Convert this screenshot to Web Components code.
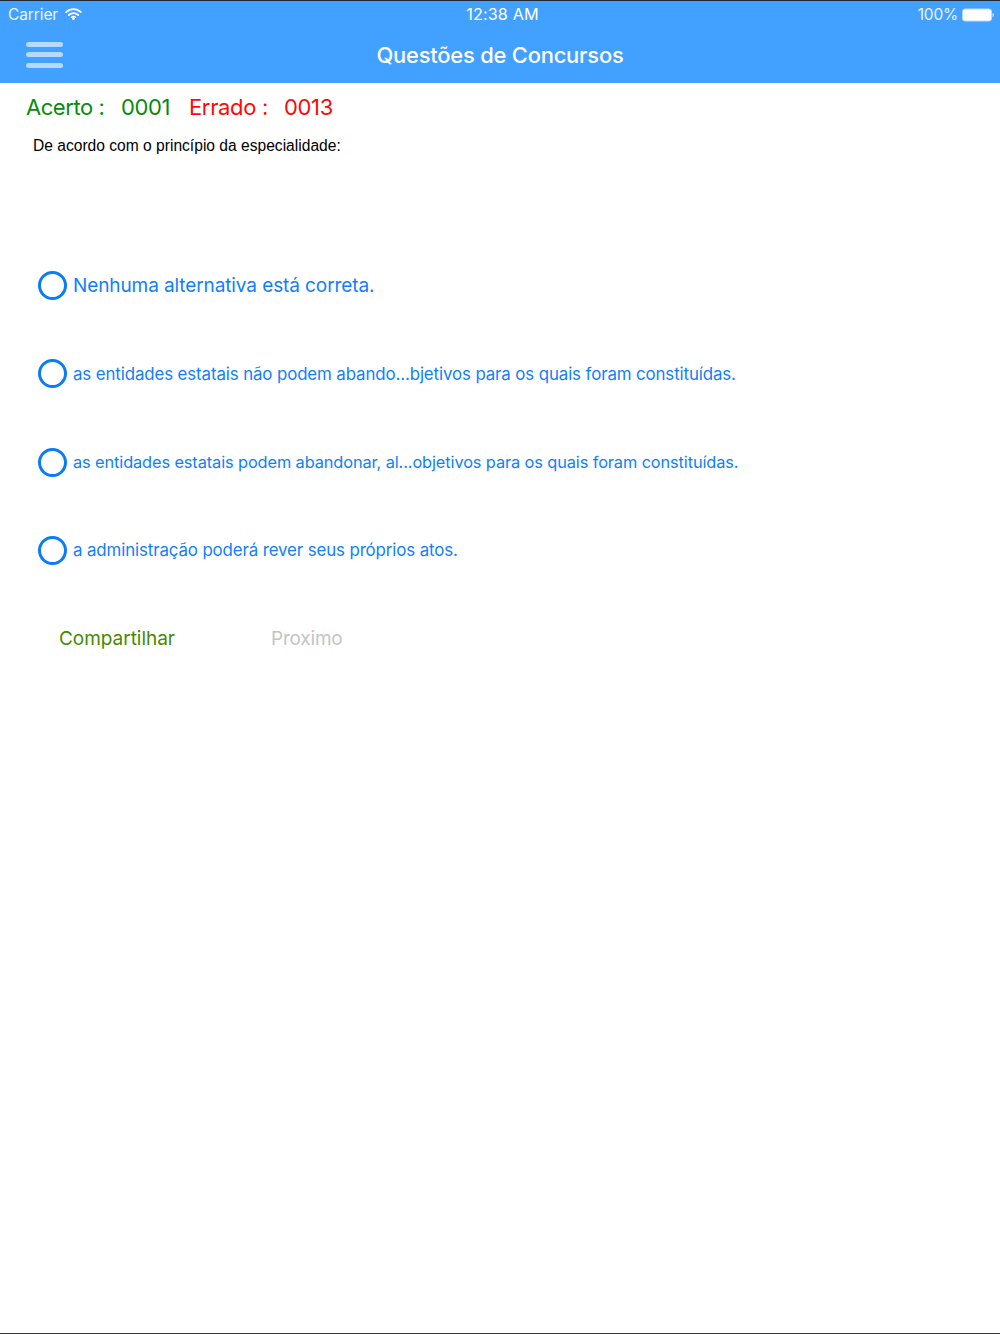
<!DOCTYPE html>
<html lang="pt"><head><meta charset="utf-8"><title>Questões de Concursos</title>
<style>html,body{margin:0;padding:0;background:#fff}</style></head><body>
<quiz-app>
<app-header title="Questões de Concursos"></app-header>
<score-bar acerto="0001" errado="0013"></score-bar>
<question-text>De acordo com o princípio da especialidade:</question-text>
<option-list>
<radio-option size="19">Nenhuma alternativa está correta.</radio-option>
<radio-option size="16.83">as entidades estatais não podem abando...bjetivos para os quais foram constituídas.</radio-option>
<radio-option size="16.34">as entidades estatais podem abandonar, al...objetivos para os quais foram constituídas.</radio-option>
<radio-option size="16.83">a administração poderá rever seus próprios atos.</radio-option>
</option-list>
<action-bar></action-bar>
</quiz-app>
<script>
const def=(n,html)=>customElements.define(n,class extends HTMLElement{connectedCallback(){if(this.shadowRoot)return;const s=this.attachShadow({mode:'open'});s.innerHTML=typeof html==='function'?html(this):html;}});
const SF='Inter,"Liberation Sans",sans-serif';
def('quiz-app',`<style>:host{display:flex;flex-direction:column;box-sizing:border-box;width:1000px;height:1334px;border-top:1px solid #1f2a36;border-bottom:1px solid #3c3c3c;background:#fff;overflow:hidden}</style><slot></slot>`);
def('app-header',h=>`<style>:host{display:block;background:#42a1ff;height:82px;color:#fff;font-family:${SF}}
.st{height:27px;display:grid;grid-template-columns:1fr auto 1fr;align-items:center;padding:0 6px 0 8px;font-size:15.5px;color:#eaf4ff}
.l{display:flex;align-items:center;gap:7px;letter-spacing:-.1px}.r{display:flex;justify-content:flex-end;align-items:center;gap:4px;letter-spacing:-.2px}
.c{font-weight:400;font-size:16.2px;letter-spacing:.15px;color:#fff;margin:0 0 2px 3px}
.nav{height:55px;display:grid;grid-template-columns:1fr auto 1fr;align-items:center;padding:0 26px 0}
.t{font-size:21.9px;font-weight:500;letter-spacing:-.2px;margin-top:-2px;white-space:nowrap}
.m{display:flex;flex-direction:column;gap:5.5px;width:37px;margin-top:-2px}.m i{display:block;height:5px;border-radius:2.5px;background:#b5d9ff}
svg{display:block}</style>
<div class="st"><div class="l">Carrier<svg width="17" height="13" viewBox="0 0 17 13" fill="none" stroke="#fff" stroke-width="1.8" stroke-linecap="round"><path d="M1.2 4.2a10.4 10.4 0 0 1 14.6 0"/><path d="M3.8 7a6.7 6.7 0 0 1 9.4 0"/><circle cx="8.5" cy="10.5" r="1.5" fill="#fff" stroke="none"/><path d="M6.300 9.400a3 3 0 0 1 4.400 0" stroke-width="1.2"/></svg></div><div class="c">12:38 AM</div><div class="r">100%<svg width="32" height="14" viewBox="0 0 32 14"><rect x=".5" y="1" width="29" height="12" rx="2.5" fill="#fff" stroke="#b9dcff"/><path d="M30.5 5v4c.9-.3 1.300-1 1.300-2s-.4-1.700-1.300-2z" fill="#dcecff"/></svg></div></div>
<div class="nav"><div class="m"><i></i><i></i><i></i></div><div class="t">${h.getAttribute('title')}</div><div></div></div>`);
def('score-bar',h=>`<style>:host{display:flex;height:47px;align-items:center;padding:0 0 0 26px;font:22px ${SF};letter-spacing:-.35px;white-space:nowrap}
.g{color:#0a8a0a}.r{color:#ff0808}b{font-weight:400}.a{width:95px;letter-spacing:-.45px}.v{width:68px}.e{width:95px}</style>
<span class="g a">Acerto :</span><b class="g v">${h.getAttribute('acerto')}</b><span class="r e">Errado :</span><b class="r">${h.getAttribute('errado')}</b>`);
def('question-text',`<style>:host{display:block;height:125.4px;box-sizing:border-box;padding:6px 0 0 33px;font:15.6px/20px "Liberation Sans",Arial,sans-serif;color:#000}</style><slot></slot>`);
def('option-list',`<style>:host{display:flex;flex-direction:column;gap:28.35px;padding-left:37.5px}</style><slot></slot>`);
def('radio-option',h=>`<style>:host{display:flex;align-items:center;gap:6.5px;height:60px;color:#0f80fa;font-family:${SF};white-space:nowrap}
.c{box-sizing:border-box;width:29px;height:29px;border:3px solid #0a7cf5;border-radius:50%;flex:none}
span{font-size:${h.getAttribute('size')}px;letter-spacing:-.1px}</style><div class="c"></div><span><slot></slot></span>`);
def('action-bar',`<style>:host{display:flex;align-items:center;height:60px;margin-top:27.6px;padding-left:59px;font:19px ${SF}}
.a{color:#458a00;width:212px;letter-spacing:-.03px}.b{color:#c4c4c4;letter-spacing:-.2px}</style><span class="a">Compartilhar</span><span class="b">Proximo</span>`);
</script>
</body></html>
